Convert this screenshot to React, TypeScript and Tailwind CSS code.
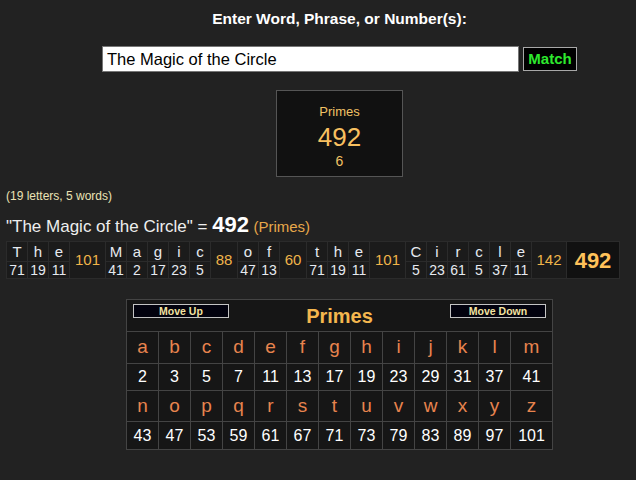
import React from "react";

type Word = { letters: string[]; values: number[]; total: number; w: string };

const words: Word[] = [
  { letters: ["T", "h", "e"], values: [71, 19, 11], total: 101, w: "w-[35px]" },
  { letters: ["M", "a", "g", "i", "c"], values: [41, 2, 17, 23, 5], total: 88, w: "w-[26px]" },
  { letters: ["o", "f"], values: [47, 13], total: 60, w: "w-[26px]" },
  { letters: ["t", "h", "e"], values: [71, 19, 11], total: 101, w: "w-[35px]" },
  { letters: ["C", "i", "r", "c", "l", "e"], values: [5, 23, 61, 5, 37, 11], total: 142, w: "w-[34px]" },
];

const row1 = "abcdefghijklm".split("");
const row1v = [2, 3, 5, 7, 11, 13, 17, 19, 23, 29, 31, 37, 41];
const row2 = "nopqrstuvwxyz".split("");
const row2v = [43, 47, 53, 59, 61, 67, 71, 73, 79, 83, 89, 97, 101];

function Breakdown() {
  return (
    <div className="flex w-fit gap-px bg-[#2b2b2b] p-px">
      {words.map((wd, wi) => (
        <React.Fragment key={wi}>
          {wd.letters.map((l, li) => (
            <div key={li} className="flex w-[20px] flex-col gap-px">
              <div className="flex h-[19px] items-center justify-center bg-[#1b1b1b] text-[15px] leading-[19px] text-[#e6eaf0]">
                {l}
              </div>
              <div className="flex h-[16px] items-center justify-center bg-[#1b1b1b] text-[14px] leading-[16px] text-[#e6eaf0]">
                {wd.values[li]}
              </div>
            </div>
          ))}
          <div className={`flex ${wd.w} items-center justify-center bg-[#1b1b1b] text-[15px] text-[#f0b44a]`}>
            {wd.total}
          </div>
        </React.Fragment>
      ))}
      <div className="flex w-[52px] items-center justify-center bg-[#111111] text-[22px] font-bold text-[#ffc25a]">
        492
      </div>
    </div>
  );
}

function CipherTable() {
  const cell = "flex items-center justify-center bg-[#161616]";
  return (
    <div className="grid w-fit grid-cols-[repeat(12,31px)_41px] gap-px bg-[#444444] p-px">
      <div className="col-span-13 flex h-[31px] items-start justify-between bg-[#161616] px-[6px]">
        <button className="mt-[4px] flex h-[14px] w-[96px] items-center justify-center border border-[#c4c4c4] bg-[#02020e] text-[10.5px] font-bold leading-none text-[#f3e3a0]">
          Move Up
        </button>
        <div className="self-center text-[20px] font-bold leading-[24px] text-[#f4b64e]">Primes</div>
        <button className="mt-[4px] flex h-[14px] w-[96px] items-center justify-center border border-[#c4c4c4] bg-[#02020e] text-[10.5px] font-bold leading-none text-[#f3e3a0]">
          Move Down
        </button>
      </div>
      {row1.map((l) => (
        <div key={"a" + l} className={`${cell} h-[31px] text-[19px] text-[#e8844e]`}>
          {l}
        </div>
      ))}
      {row1v.map((v, i) => (
        <div key={"b" + i} className={`${cell} h-[26px] text-[16px] text-white`}>
          {v}
        </div>
      ))}
      {row2.map((l) => (
        <div key={"c" + l} className={`${cell} h-[30px] text-[19px] text-[#e8844e]`}>
          {l}
        </div>
      ))}
      {row2v.map((v, i) => (
        <div key={"d" + i} className={`${cell} h-[27px] text-[16px] text-white`}>
          {v}
        </div>
      ))}
    </div>
  );
}

export default function App() {
  return (
    <div className="min-h-screen w-[636px] overflow-hidden bg-[#222222] font-['Liberation_Sans',Arial,sans-serif]">
      <div className="flex justify-center pl-[43px] pt-[10px]">
        <div className="text-[15.5px] font-bold leading-[18px] text-white">Enter Word, Phrase, or Number(s):</div>
      </div>
      <div className="mt-[18px] flex items-center justify-center gap-[4px] pl-[43px]">
        <div className="flex h-[26px] w-[417px] items-center border border-[#767676] bg-white pl-[4px] text-[16.5px] text-black">
          The Magic of the Circle
        </div>
        <button className="flex h-[24px] w-[54px] items-center justify-center border border-[#a8a8a8] bg-black text-[15px] font-bold text-[#2ee82e]">
          Match
        </button>
      </div>
      <div className="mt-[18px] flex justify-center pl-[43px]">
        <div className="flex h-[87px] w-[127px] flex-col items-center border border-[#555555] bg-[#111111] pt-[13px]">
          <div className="text-[13px] leading-[16px] text-[#f2c265]">Primes</div>
          <div className="mt-[2px] text-[26px] leading-[30px] text-[#f8c060]">492</div>
          <div className="mt-[1px] text-[14px] leading-[16px] text-[#f2c265]">6</div>
        </div>
      </div>
      <div className="mt-[12px] px-[6px] text-[12px] leading-[14px] text-[#ebe3b5]">(19 letters, 5 words)</div>
      <div className="mt-[11px] px-[6px] leading-[22px]">
        <span className="text-[17px] text-[#eeeeee]">"The Magic of the Circle" = </span>
        <span className="text-[22px] font-bold text-white">492</span>{" "}
        <span className="text-[15px] text-[#e8a84a]">(Primes)</span>
      </div>
      <div className="mt-[3px] px-[6px]">
        <Breakdown />
      </div>
      <div className="mt-[20px] flex justify-center pl-[43px] pb-[30px]">
        <CipherTable />
      </div>
    </div>
  );
}
